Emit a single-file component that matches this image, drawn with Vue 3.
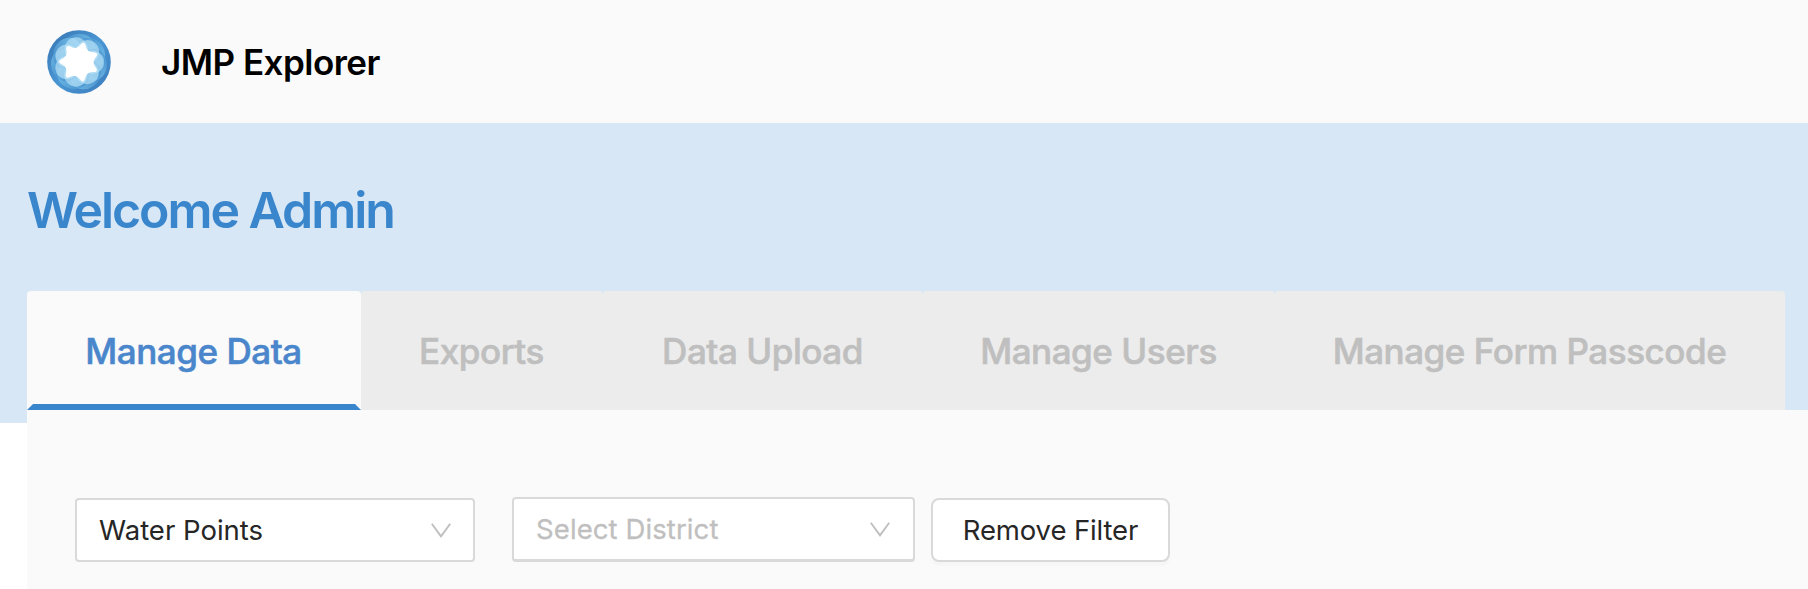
<script setup>
import { ref } from 'vue'

const tabs = [
  { id: 'data', label: 'Manage Data' },
  { id: 'exports', label: 'Exports' },
  { id: 'upload', label: 'Data Upload' },
  { id: 'users', label: 'Manage Users' },
  { id: 'passcode', label: 'Manage Form Passcode' },
]
const active = ref('data')
const petals = [0, 1, 2, 3, 4, 5, 6].map((n) => (n * 360) / 7)
</script>

<template>
  <div class="page">
    <header class="header">
      <svg class="logo" viewBox="-32 -32 64 64" aria-hidden="true">
        <defs>
          <linearGradient id="ring" x1="0" y1="0" x2="1" y2="1">
            <stop offset="0" stop-color="#3674b2" />
            <stop offset="0.5" stop-color="#4a96d2" />
            <stop offset="1" stop-color="#3a7abc" />
          </linearGradient>
          <linearGradient id="blade" x1="0" y1="0" x2="1" y2="0">
            <stop offset="0" stop-color="#3f8bcb" />
            <stop offset="1" stop-color="#86d0f3" />
          </linearGradient>
        </defs>
        <circle r="31.8" fill="url(#ring)" />
        <g v-for="a in petals" :key="'b' + a" :transform="`rotate(${a - 10})`">
          <ellipse cx="2" cy="-14.5" rx="16" ry="13.5" fill="url(#blade)" opacity="0.6" />
        </g>
        <g v-for="a in petals" :key="'p' + a" :transform="`rotate(${a - 12})`">
          <circle cx="0" cy="-13.5" r="11.5" fill="#c2e9fa" opacity="0.62" />
        </g>
        <g fill="#fff">
          <circle r="14.2" />
          <path
            v-for="a in petals"
            :key="'s' + a"
            :transform="`rotate(${a + 14})`"
            d="M-6.4 -12.8Q-3.6 -14.6 -1.9 -18.6Q0 -21 1.9 -18.6Q3.6 -14.6 6.4 -12.8L0 0Z"
          />
        </g>
      </svg>
      <h1 class="brand">JMP Explorer</h1>
    </header>

    <section class="hero">
      <h2 class="welcome">Welcome Admin</h2>
    </section>

    <main class="main">
      <nav class="tabs">
        <button
          v-for="tab in tabs"
          :key="tab.id"
          class="tab"
          :class="[tab.id, { active: active === tab.id }]"
          @click="active = tab.id"
        >
          <span>{{ tab.label }}</span>
        </button>
      </nav>
      <div class="panel">
        <div class="select source">
          <span class="value">Water Points</span>
          <svg class="chevron" viewBox="0 0 20 15"><path d="M0.8 0.8L10 13.4L19.2 0.8" /></svg>
        </div>
        <div class="select district">
          <span class="value">Select District</span>
          <svg class="chevron" viewBox="0 0 20 15"><path d="M0.8 0.8L10 13.4L19.2 0.8" /></svg>
        </div>
        <button class="remove"><span>Remove Filter</span></button>
      </div>
    </main>
  </div>
</template>

<style>
body {
  background: #fff;
  overflow: hidden;
}
</style>

<style scoped>
.page {
  width: 100%;
  height: 589px;
  overflow: hidden;
  display: flex;
  flex-direction: column;
  font-family: Inter, "Liberation Sans", sans-serif;
}
.page * {
  box-sizing: border-box;
}
button {
  font-family: inherit;
  margin: 0;
  padding: 0;
}
.header {
  flex: none;
  height: 123px;
  background: #fafafa;
  display: flex;
  align-items: center;
  padding-left: 47px;
}
.logo {
  width: 64px;
  height: 64px;
}
.brand {
  margin: 0 0 0 50px;
  font-size: 35px;
  line-height: 44px;
  font-weight: 600;
  letter-spacing: -0.52px;
  color: #000;
  white-space: nowrap;
}
.hero {
  flex: none;
  height: 300px;
  background: #d7e7f6;
  padding: 56px 0 0 27px;
}
.welcome {
  margin: 0;
  font-size: 50px;
  line-height: 62px;
  font-weight: 600;
  letter-spacing: -2.05px;
  color: #3a86cc;
  white-space: nowrap;
}
.main {
  flex: none;
  margin: -132px 0 0 27px;
}
.tabs {
  height: 119px;
  display: flex;
}
.tab {
  flex: none;
  border: 0 solid transparent;
  border-radius: 4px 4px 0 0;
  background: #ececec;
  color: #bfbfbf;
  font-size: 35px;
  line-height: 44px;
  font-weight: 500;
  -webkit-text-stroke: 0.6px currentColor;
  letter-spacing: -0.45px;
  white-space: nowrap;
  padding: 1px 1px 0 0;
}
.tab.active {
  background: #fafafa;
  color: #4a86cb;
  border-width: 0 6px 6px;
  border-bottom-color: #3a86cc;
  padding-top: 7px;
}
.data { width: 334px; }
.exports { width: 242px; }
.upload { width: 320px; }
.users { width: 352px; }
.passcode { width: 510px; }
.panel {
  height: 179px;
  background: #fafafa;
  padding: 87px 0 0 48px;
  display: flex;
  align-items: flex-start;
}
.select {
  display: flex;
  align-items: center;
  justify-content: space-between;
  border: 2px solid #d9d9d9;
  border-radius: 4px;
  background: #fff;
  font-size: 27.5px;
  line-height: 36px;
  padding: 0 22px;
  white-space: nowrap;
}
.source {
  width: 400px;
  height: 64px;
  margin-top: 1px;
  color: #262626;
}
.district {
  width: 403px;
  height: 65px;
  margin-left: 37px;
  padding-right: 23px;
  border-bottom-width: 3px;
  color: #bfbfbf;
}
.chevron {
  width: 20px;
  height: 15px;
  fill: none;
  stroke: #bfbfbf;
  stroke-width: 1.9;
}
.source .value { letter-spacing: 0; }
.district .value {
  letter-spacing: 0.1px;
  -webkit-text-stroke: 0.3px currentColor;
}
.remove {
  width: 239px;
  height: 64px;
  margin: 1px 0 0 16px;
  border: 2px solid #d9d9d9;
  border-radius: 8px;
  background: #fff;
  box-shadow: 0 4px 0 rgba(0, 0, 0, 0.016);
  color: #262626;
  font-size: 27.5px;
  letter-spacing: -0.12px;
  white-space: nowrap;
}
</style>
